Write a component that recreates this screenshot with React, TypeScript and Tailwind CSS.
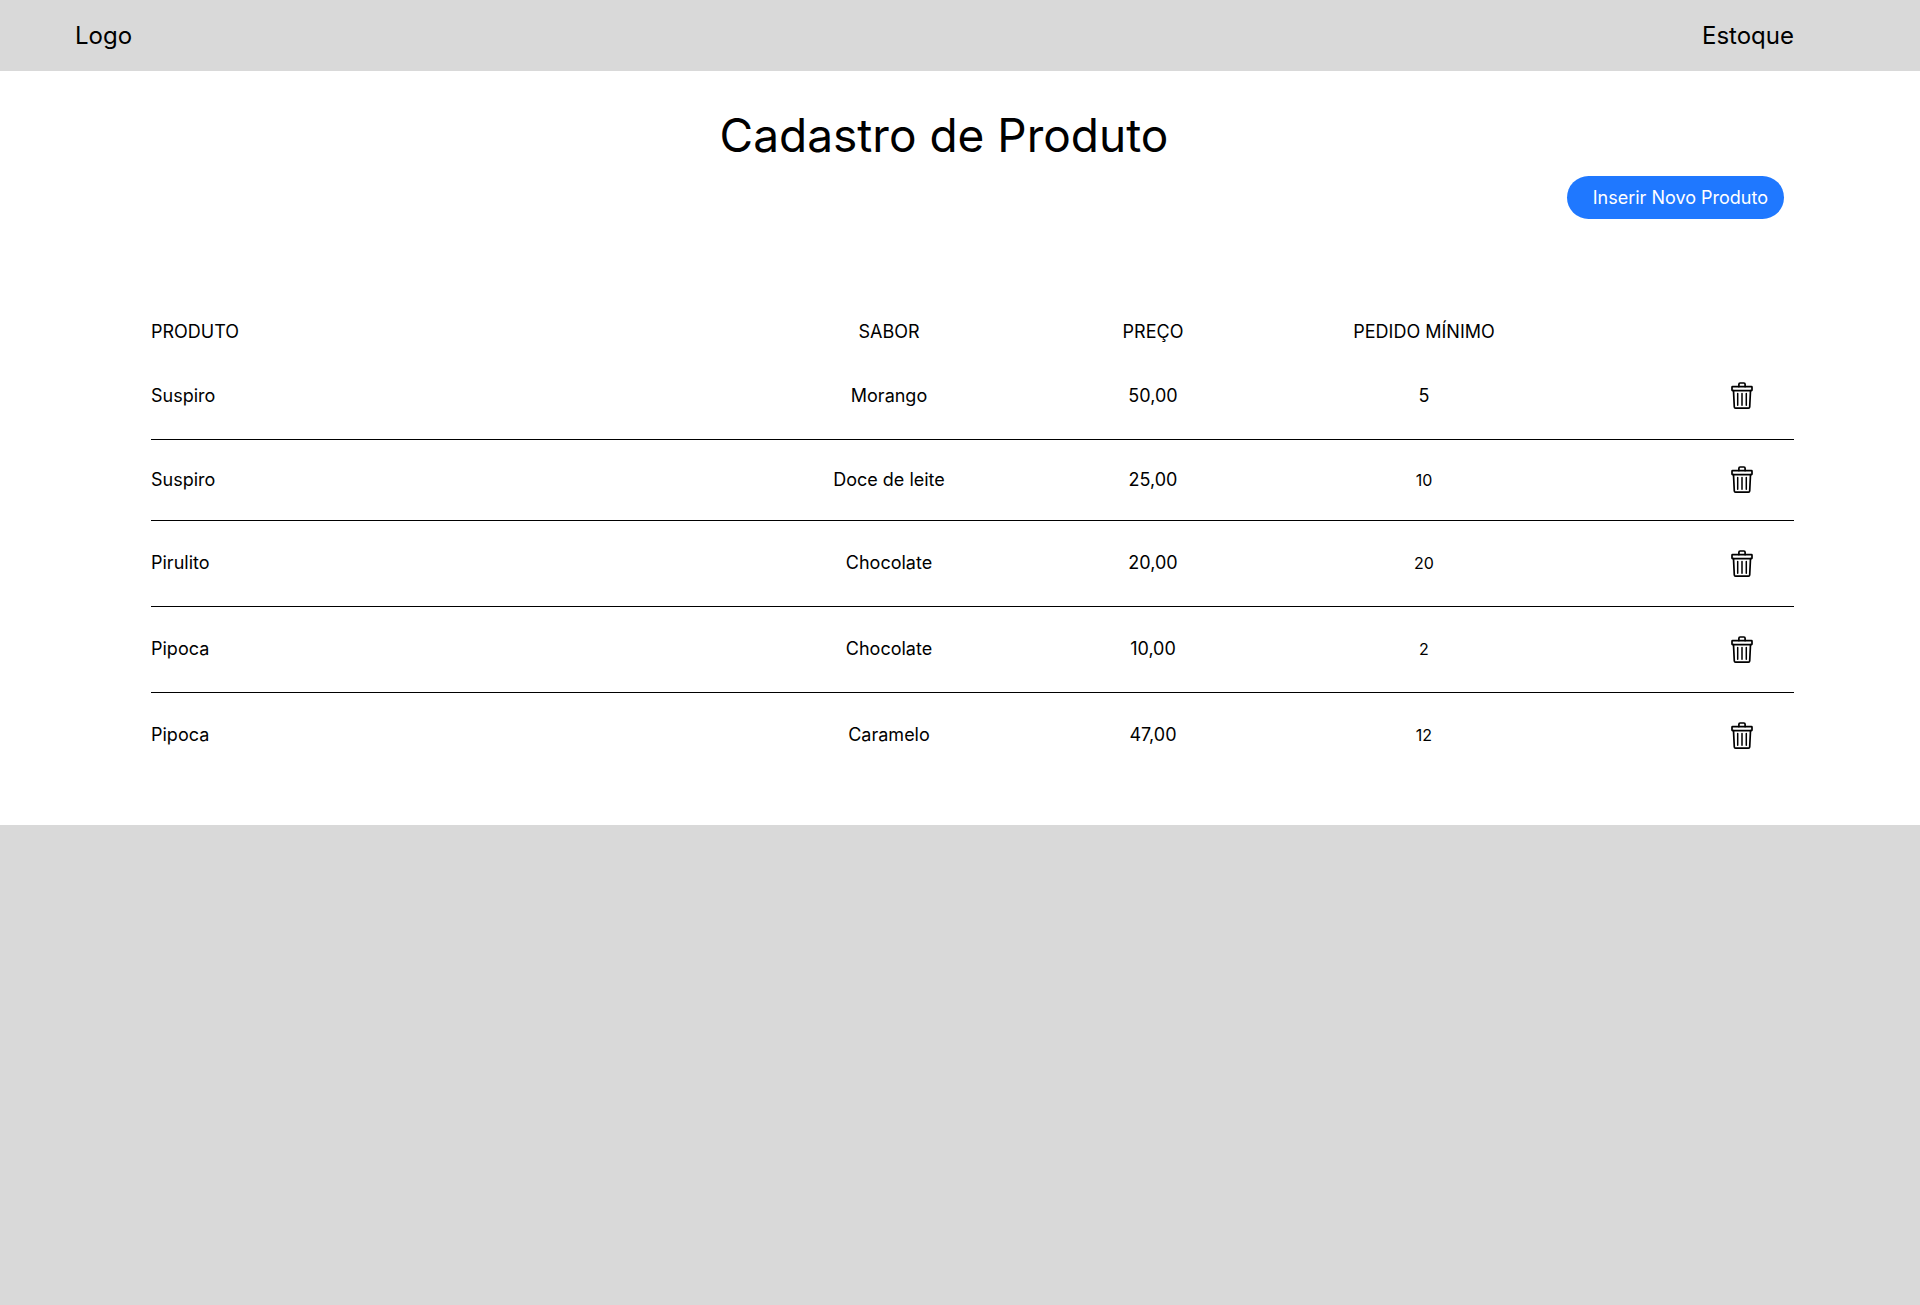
type Product = {
  name: string;
  flavor: string;
  price: string;
  minimum: string;
  height: string;
  minimumSize: string;
};

const products: Product[] = [
  { name: "Suspiro", flavor: "Morango", price: "50,00", minimum: "5", height: "h-[86px]", minimumSize: "text-lg" },
  { name: "Suspiro", flavor: "Doce de leite", price: "25,00", minimum: "10", height: "h-[81px]", minimumSize: "text-base" },
  { name: "Pirulito", flavor: "Chocolate", price: "20,00", minimum: "20", height: "h-[86px]", minimumSize: "text-base" },
  { name: "Pipoca", flavor: "Chocolate", price: "10,00", minimum: "2", height: "h-[86px]", minimumSize: "text-base" },
  { name: "Pipoca", flavor: "Caramelo", price: "47,00", minimum: "12", height: "h-[86px]", minimumSize: "text-base" },
];

function TrashIcon() {
  return (
    <svg
      viewBox="0 0 22 27"
      className="block h-[27px] w-[22px]"
      fill="none"
      stroke="currentColor"
      strokeWidth="1.7"
      strokeLinecap="round"
      strokeLinejoin="round"
      aria-hidden="true"
    >
      <path d="M7.9 4.6V2.2A1.2 1.2 0 0 1 9.1 1h3.8a1.2 1.2 0 0 1 1.2 1.2v2.4" />
      <rect x="1" y="4.7" width="20" height="3.9" rx="0.5" />
      <path d="M2.5 8.6l.8 16.4a1.2 1.2 0 0 0 1.2 1.1h13a1.2 1.2 0 0 0 1.2-1.1l.8-16.4" />
      <path strokeWidth="1.5" d="M6.7 11.6v11.6M11 11.6v11.6M15.3 11.6v11.6" />
    </svg>
  );
}

export default function App() {
  return (
    <div className="min-h-screen bg-[#d9d9d9] font-['Inter',sans-serif] text-black">
      <header className="flex h-[71px] items-center justify-between pr-[126px] pl-[75px] text-2xl">
        <a href="#">Logo</a>
        <a href="#estoque">Estoque</a>
      </header>

      <main className="bg-white pt-9 pb-[47px]">
        <h1 className="pr-8 text-center text-[46px] leading-[56px]">Cadastro de Produto</h1>

        <div className="mt-[13px] flex justify-end pr-[136px]">
          <button
            type="button"
            className="h-[43px] cursor-pointer rounded-full bg-[#1f78ff] pr-4 pl-[26px] text-lg text-white"
          >
            Inserir Novo Produto
          </button>
        </div>

        <div className="mt-[91px] pr-[126px] pl-[151px]">
          <table className="w-full table-fixed border-collapse text-lg leading-6">
            <colgroup>
              <col />
              <col className="w-[280px]" />
              <col className="w-[248px]" />
              <col className="w-[294px]" />
              <col className="w-[223px]" />
            </colgroup>
            <thead>
              <tr className="h-[43px]">
                <th scope="col" className="p-0 text-left font-normal">PRODUTO</th>
                <th scope="col" className="p-0 text-center font-normal">SABOR</th>
                <th scope="col" className="p-0 text-center font-normal">PREÇO</th>
                <th scope="col" className="p-0 text-center font-normal">PEDIDO MÍNIMO</th>
                <td className="p-0" />
              </tr>
            </thead>
            <tbody>
              {products.map((product, index) => (
                <tr key={index} className={`${product.height} border-b border-black last:border-b-0`}>
                  <td className="p-0">{product.name}</td>
                  <td className="p-0 text-center">{product.flavor}</td>
                  <td className="p-0 text-center">{product.price}</td>
                  <td className={`p-0 text-center ${product.minimumSize}`}>{product.minimum}</td>
                  <td className="p-0 pr-[41px]">
                    <button
                      type="button"
                      aria-label={`Excluir ${product.name} ${product.flavor}`}
                      className="ml-auto block cursor-pointer"
                    >
                      <TrashIcon />
                    </button>
                  </td>
                </tr>
              ))}
            </tbody>
          </table>
        </div>
      </main>
    </div>
  );
}
